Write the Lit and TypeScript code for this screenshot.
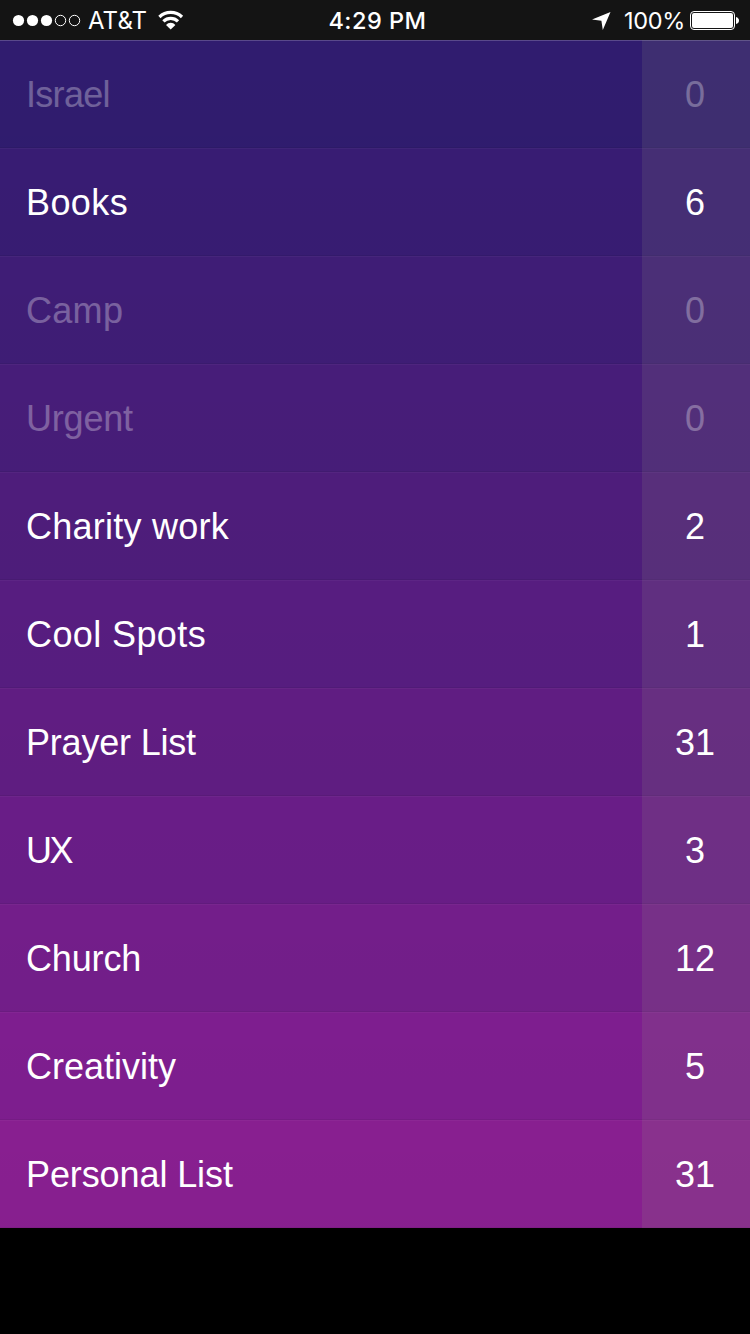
import { LitElement, html, css } from "lit";
import { customElement } from "lit/decorators.js";
import { classMap } from "lit/directives/class-map.js";
import { styleMap } from "lit/directives/style-map.js";

interface Item {
  name: string;
  count: number;
  color: string;
  tracking: number;
}

const ITEMS: Item[] = [
  { name: "Israel", count: 0, color: "#301c6f", tracking: -0.7 },
  { name: "Books", count: 6, color: "#381c73", tracking: 0.4 },
  { name: "Camp", count: 0, color: "#3f1d76", tracking: 0.3 },
  { name: "Urgent", count: 0, color: "#471d79", tracking: -0.2 },
  { name: "Charity work", count: 2, color: "#4e1d7b", tracking: 0.25 },
  { name: "Cool Spots", count: 1, color: "#571d80", tracking: 0.4 },
  { name: "Prayer List", count: 31, color: "#601d82", tracking: -0.2 },
  { name: "UX", count: 3, color: "#691d87", tracking: -2.4 },
  { name: "Church", count: 12, color: "#731e8a", tracking: -0.15 },
  { name: "Creativity", count: 5, color: "#7e1e8f", tracking: 0 },
  { name: "Personal List", count: 31, color: "#881f90", tracking: -0.1 },
];

@customElement("status-bar")
class StatusBar extends LitElement {
  static styles = css`
    :host {
      display: grid;
      grid-template-columns: 1fr auto 1fr;
      align-items: center;
      height: 40px;
      box-sizing: border-box;
      padding: 0 11px 0 12px;
      background: #141414;
      color: #fff;
      font: 24px/38px Inter, "Liberation Sans", sans-serif;
    }
    .side { display: flex; align-items: center; height: 40px; }
    .right { justify-content: flex-end; }
    svg { display: block; flex: none; }
    span { padding-top: 2px; }
    .carrier { margin: 0 11px 0 7px; letter-spacing: 0.1px; }
    .time { font-weight: 500; font-size: 23.5px; letter-spacing: 0.5px; padding-left: 4px; }
    .percent { margin: 0 5px 0 13px; font-size: 23.5px; letter-spacing: -0.3px; }
  `;

  render() {
    return html`
      <div class="side">
        <svg width="69" height="40" viewBox="0 0 69 40">
          <g fill="#fff">
            <circle cx="6.5" cy="20.5" r="5.6" />
            <circle cx="20.5" cy="20.5" r="5.6" />
            <circle cx="34.5" cy="20.5" r="5.6" />
          </g>
          <g fill="none" stroke="#fff" stroke-width="1">
            <circle cx="48.5" cy="20.5" r="5.2" />
            <circle cx="62.5" cy="20.5" r="5.2" />
          </g>
        </svg>
        <span class="carrier">AT&amp;T</span>
        <svg width="26" height="40" viewBox="0 0 26 40">
          <g fill="none" stroke="#fff" stroke-width="3.2">
            <path d="M1.4 17 A16.2 16.2 0 0 1 24 17" />
            <path d="M5.4 21.4 A10.4 10.4 0 0 1 20 21.4" />
          </g>
          <path fill="#fff" d="M8 24.9 A6.4 6.4 0 0 1 17.4 24.9 L12.7 29.4 Z" />
        </svg>
      </div>
      <span class="time">4:29 PM</span>
      <div class="side right">
        <svg width="19" height="40" viewBox="0 0 19 40">
          <path fill="#fff" d="M18.5 12 L0 19.6 L9.4 20.7 L10.8 30 Z" />
        </svg>
        <span class="percent">100%</span>
        <svg width="49" height="40" viewBox="0 0 49 40">
          <rect x="0.5" y="11.5" width="44" height="18" rx="3.5" fill="none" stroke="#fff" />
          <rect x="2" y="13" width="41" height="15" rx="2" fill="#fff" />
          <path fill="#fff" d="M46 17 Q49 18 49 20.5 Q49 23 46 24 Z" />
        </svg>
      </div>
    `;
  }
}

@customElement("list-row")
class ListRow extends LitElement {
  static properties = { item: { attribute: false } };
  declare item: Item;

  static styles = css`
    :host { display: block; }
    .row {
      display: grid;
      grid-template-columns: 642px 108px;
      height: 108px;
      box-sizing: border-box;
      background-image: linear-gradient(transparent, rgba(0, 0, 0, 0.012));
      box-shadow: inset 0 1px rgba(255, 255, 255, 0.04), inset 0 -1px rgba(0, 0, 0, 0.06);
      color: #fff;
      font: 36px/104px "Liberation Sans", Arial, sans-serif;
    }
    .row > div { height: 108px; box-sizing: border-box; }
    .label { padding: 3px 0 0 26px; }
    .count {
      padding: 3px 2px 0 0;
      text-align: center;
      background: rgba(145, 155, 125, 0.15);
    }
    .text { display: inline-block; white-space: nowrap; }
    .empty .text { opacity: 0.3; }
    .first { box-shadow: inset 0 1px rgba(255, 255, 255, 0.2), inset 0 -1px rgba(0, 0, 0, 0.06); }
  `;

  render() {
    const { name, count, color, tracking } = this.item;
    return html`
      <div
        class=${classMap({ row: true, empty: count === 0, first: this.item === ITEMS[0] })}
        style=${styleMap({ backgroundColor: color })}
      >
        <div class="label">
          <span class="text" style=${styleMap({ letterSpacing: `${tracking}px` })}>${name}</span>
        </div>
        <div class="count"><span class="text">${count}</span></div>
      </div>
    `;
  }
}

@customElement("app-root")
class AppRoot extends LitElement {
  static styles = css`
    :host {
      display: flex;
      flex-direction: column;
      width: 750px;
      height: 1334px;
      background: #000;
      overflow: hidden;
    }
  `;

  render() {
    return html`
      <status-bar></status-bar>
      <main>${ITEMS.map((item) => html`<list-row .item=${item}></list-row>`)}</main>
    `;
  }
}
